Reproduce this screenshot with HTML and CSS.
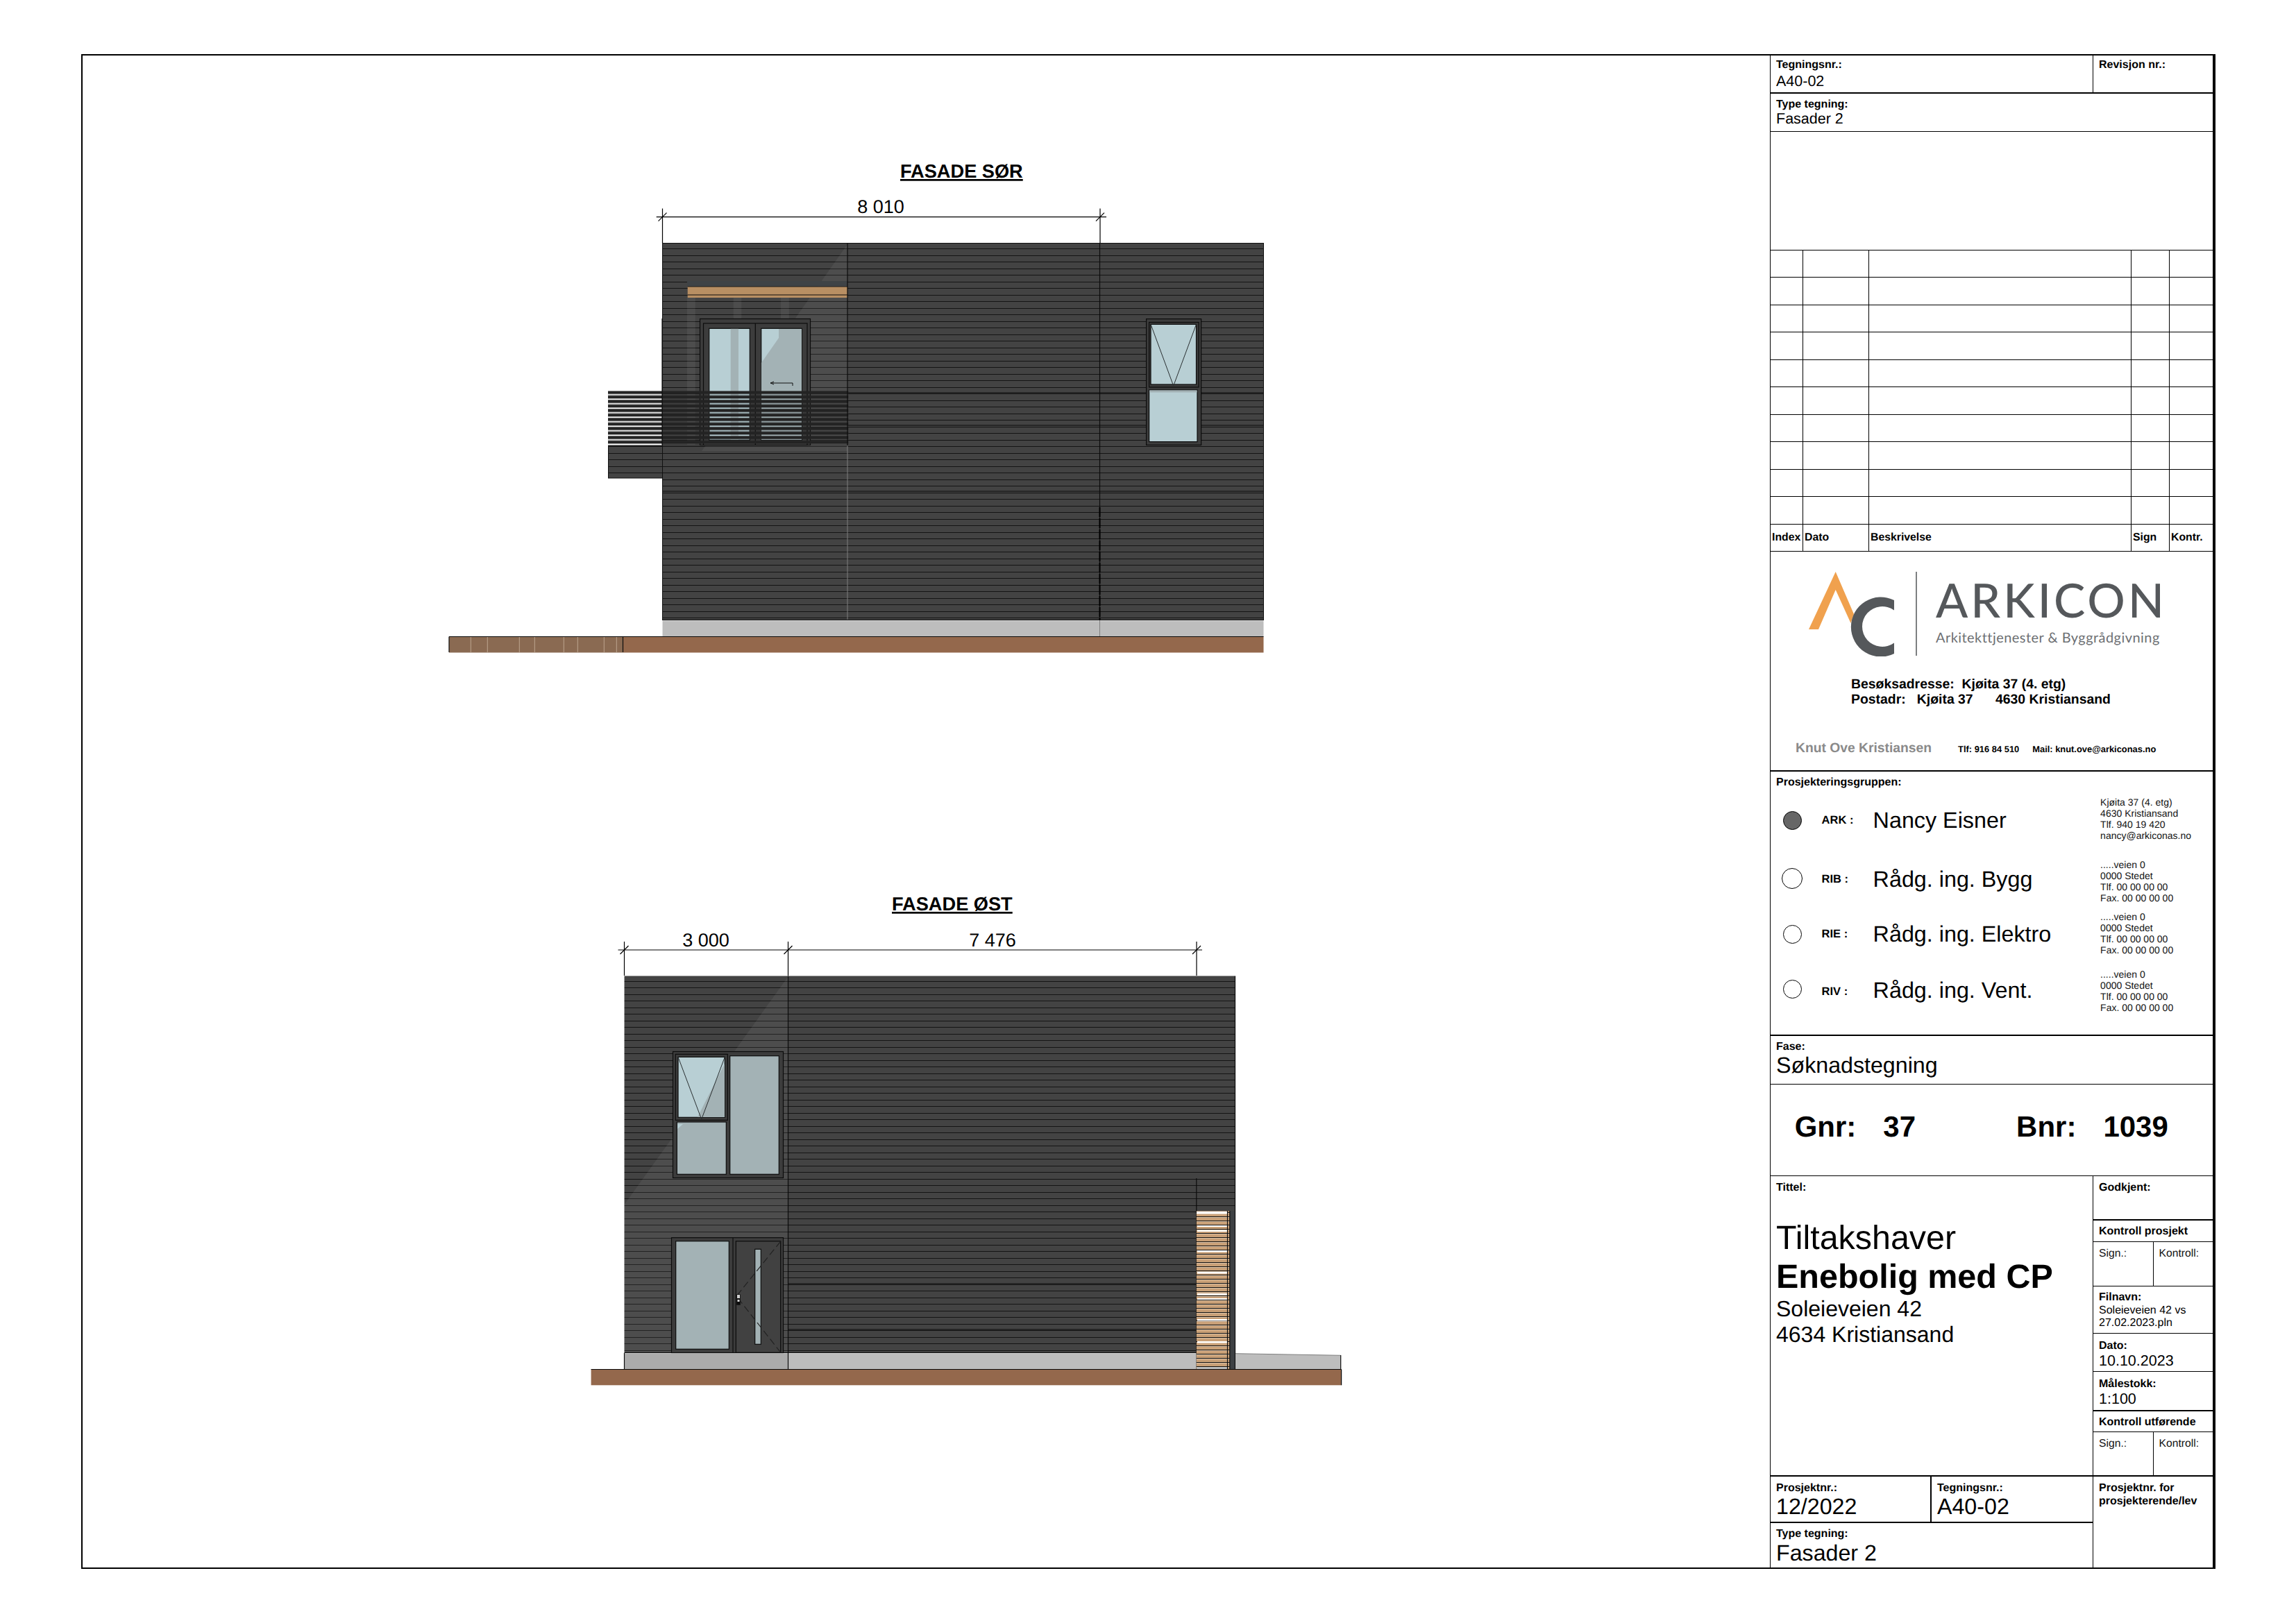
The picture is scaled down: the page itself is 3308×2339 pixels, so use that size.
FILE: index.html
```html
<!DOCTYPE html>
<html lang="no">
<head>
<meta charset="utf-8">
<title>A40-02 Fasader 2</title>
<link rel="stylesheet" href="styles.css">
</head>
<body>
<main class="sheet">
  <section class="drawing">
    <svg class="plan" viewBox="119 80 2431 2179" xmlns="http://www.w3.org/2000/svg">
      <defs>
        <pattern id="sidingS" patternUnits="userSpaceOnUse" width="10" height="19" patternTransform="translate(0 7)">
          <rect width="10" height="19" fill="#434343"/>
          <rect width="10" height="1" fill="#141414"/>
          <rect y="9" width="10" height="1" fill="#141414"/>
        </pattern>
        <pattern id="sidingE" patternUnits="userSpaceOnUse" width="10" height="19" patternTransform="translate(0 8)">
          <rect width="10" height="19" fill="#434343"/>
          <rect width="10" height="1" fill="#141414"/>
          <rect y="9" width="10" height="1" fill="#141414"/>
        </pattern>
        <pattern id="rail" patternUnits="userSpaceOnUse" width="10" height="13" patternTransform="translate(0 563.3)">
          <rect width="10" height="4.6" fill="#232323"/>
          <rect y="6.5" width="10" height="4.6" fill="#232323"/>
        </pattern>
        <pattern id="slats" patternUnits="userSpaceOnUse" width="10" height="6" patternTransform="translate(0 1749)">
          <rect width="10" height="6" fill="#c9a077"/>
          <rect y="4" width="10" height="1" fill="#111"/>
          <rect y="5" width="10" height="0.5" fill="#efe6da"/>
        </pattern>
      </defs>

      <!-- Fasade sør -->
      <text class="dwg-title" x="1297" y="256">FASADE SØR</text>
      <g class="dim">
        <path d="M945.7 312.7H1594M954.5 300.6V350.5M1585 300.6V350.5"/>
        <path d="M948.5 318.7L960.5 306.7M1579 318.7L1591 306.7"/>
      </g>
      <text class="dim-text" x="1269" y="307">8 010</text>

      <rect x="954.5" y="350.5" width="866" height="543" fill="url(#sidingS)" stroke="#111"/>
      <rect x="876.5" y="642.5" width="78" height="46.5" fill="url(#sidingS)" stroke="#111"/>
      <polygon class="sheen" points="1221,352 1221,650 1011,650"/>
      <rect class="sheen" x="990" y="429" width="11.7" height="212"/>
      <rect class="sheen" x="1056.7" y="429" width="11.6" height="30"/>
      <rect class="sheen" x="1125" y="429" width="11.7" height="30"/>
      <path class="heavy" d="M1221 566H1820.5M1221 613H1820.5M955 708H1820.5"/>

      <rect class="beam" x="990.7" y="413" width="230.3" height="16"/>
      <path class="seam" d="M990.7 413H1221M990.7 425H1221"/>
      <path class="shade" d="M990 405H1221V412.5H990Z"/>

      <rect class="frame" x="1008.5" y="459.5" width="159" height="182"/>
      <rect class="frame" x="1013.5" y="466" width="149.5" height="175.5"/>
      <path class="seam" d="M1088.3 466V641.5"/>
      <rect class="pane" x="1021.7" y="473.3" width="58.6" height="161"/>
      <rect class="pane-shade" x="1052.7" y="473.8" width="11.3" height="160"/>
      <rect class="pane" x="1096.7" y="473.3" width="58.6" height="161"/>
      <polygon class="pane-shade" points="1122,474 1155,474 1155,634 1096.9,634 1096.9,523 1122,487"/>
      <path class="thin" d="M1142 556V552H1110M1110 552L1115 550M1110 552L1115 554"/>

      <rect x="876" y="563.3" width="346.3" height="78.4" fill="url(#rail)"/>
      <path class="seam" d="M954 459V563M954 563V641.5"/>

      <rect class="frame" x="1651.6" y="459.6" width="79" height="181.8"/>
      <rect class="frame" x="1655.6" y="464.5" width="71.4" height="93.5"/>
      <rect class="pane" x="1658" y="467.4" width="65.5" height="86.6"/>
      <rect class="pane" x="1655.6" y="562" width="69.4" height="74.6"/>
      <rect class="pane-shade" x="1656" y="562.5" width="68.5" height="3"/>
      <path class="tilt" d="M1658 467.4L1690.7 556L1723.5 467.4"/>

      <path class="seam" d="M1221 350.5V642"/>
      <path class="pale" d="M1221 642V893"/>
      <path class="seam" d="M1584.5 350.5V893"/>
      <path class="heavy-dash" d="M1584.5 731V893"/>
      <rect class="plinth" x="954.5" y="894.5" width="866" height="23"/>
      <path class="seam" d="M954.5 893.5H1820.5"/>
      <path class="pale" d="M1584.5 894V917"/>
      <rect class="ground" x="897.5" y="917.5" width="923" height="23"/>
      <rect class="patio" x="647" y="917.5" width="250.5" height="23"/>
      <path class="seam" d="M647 917.5H1820.5M647 917.5V940M897.5 917.5V940"/>
      <path class="joint" d="M678.3 918V940M702.3 918V940M748.3 918V940M770.3 918V940M812.3 918V940M832.3 918V940M870.3 918V940M888.3 918V940"/>

      <!-- Fasade øst -->
      <text class="dwg-title" x="1285" y="1312">FASADE ØST</text>
      <g class="dim">
        <path d="M890.5 1369H1732M899.5 1357V1406M1135.5 1357V1406M1724 1357V1406"/>
        <path d="M893.5 1375L905.5 1363M1129.5 1375L1141.5 1363M1718 1375L1730 1363"/>
      </g>
      <text class="dim-text" x="1017" y="1364">3 000</text>
      <text class="dim-text" x="1430" y="1364">7 476</text>

      <rect x="899.5" y="1406.5" width="879.5" height="543" fill="url(#sidingE)"/>
      <polygon class="sheen" points="1135,1408 1135,1949 899.5,1949 899.5,1736"/>
      <path class="heavy" d="M1135.5 1850H1723M1135.5 1916H1723"/>
      <path class="seam" d="M1135.5 1406.5V1973M1723.8 1698V1973"/>

      <rect class="frame" x="969.5" y="1515.5" width="159" height="182"/>
      <rect class="frame" x="973.3" y="1519.3" width="75" height="95"/>
      <rect class="pane" x="977" y="1523.3" width="67.3" height="87"/>
      <polygon class="pane-shade" points="1044,1533 1044,1610 1005,1610"/>
      <path class="tilt" d="M977 1523.3L1010.7 1613L1044.3 1523.3"/>
      <rect class="pane-dim" x="975.3" y="1617" width="71" height="75.3"/>
      <polygon class="glint" points="976,1620 984,1620 976,1627"/>
      <rect class="pane-dim" x="1051.7" y="1521.7" width="70.6" height="170.6"/>

      <rect class="frame" x="967.5" y="1783.7" width="161" height="166"/>
      <rect class="pane-dim" x="973.7" y="1788.7" width="76.6" height="155.6"/>
      <path class="seam" d="M1056 1784V1950"/>
      <rect class="leaf" x="1060.3" y="1788.7" width="64.4" height="160.6"/>
      <rect class="pane-dim" x="1087.7" y="1800.3" width="8.6" height="137"/>
      <path class="dash" d="M1124.7 1789L1061 1868L1124.7 1949"/>
      <rect class="handle" x="1061.3" y="1865.3" width="5.4" height="15.4"/>
      <rect class="handle-top" x="1062" y="1866" width="4" height="5"/>
      <rect class="handle-top" x="1062.5" y="1873" width="3" height="3"/>

      <rect class="plinth-dark" x="899.5" y="1950.4" width="235.5" height="23"/>
      <rect class="plinth" x="1135.5" y="1950.4" width="588" height="23"/>
      <path class="seam" d="M899.5 1949.5H1779M899.5 1950V1973M1135.5 1950V1973"/>

      <rect x="1723.8" y="1745.3" width="48" height="228" fill="url(#slats)"/>
      <g class="gap">
        <rect x="1724" y="1746" width="44.5" height="3.5"/>
        <rect x="1725" y="1766" width="43" height="2"/>
        <rect x="1725" y="1773" width="43" height="2"/>
        <rect x="1725" y="1802" width="43" height="2.5"/>
        <rect x="1725" y="1833" width="43" height="2.5"/>
        <rect x="1725" y="1864" width="43" height="2.5"/>
        <rect x="1725" y="1871" width="43" height="2"/>
        <rect x="1725" y="1901" width="43" height="2.5"/>
        <rect x="1725" y="1933" width="43" height="2.5"/>
      </g>
      <rect class="plinth" x="1724.5" y="1970" width="44" height="3"/>
      <rect class="post" x="1771.8" y="1745.3" width="7.5" height="228"/>
      <path class="seam" d="M1768.5 1745V1973M1771.8 1745V1973M1779.5 1406.5V1973"/>
      <polygon class="plinth" points="1780,1950.7 1931.7,1953.3 1931.7,1973.3 1780,1973.3"/>
      <path class="pale" d="M1780 1950.7L1931.7 1953.3"/>
      <path class="seam" d="M1931.7 1953V1973"/>
      <rect class="ground" x="851.6" y="1973.3" width="1081" height="23"/>
      <path class="seam" d="M851.6 1973.5H1932.6M1932.6 1973.5V1996.3"/>
    </svg>
  </section>

  <aside class="block">
    <div class="sec s-head">
      <div class="cell grow">
        <p class="lab">Tegningsnr.:</p>
        <p class="val v-a">A40-02</p>
      </div>
      <div class="cell side first-side">
        <p class="lab">Revisjon nr.:</p>
      </div>
    </div>
    <div class="sec s-type">
      <p class="lab">Type tegning:</p>
      <p class="val v-b">Fasader 2</p>
    </div>
    <div class="sec s-blank"></div>

    <div class="sec revs">
      <div></div><div></div><div></div><div></div><div></div>
      <div></div><div></div><div></div><div></div><div></div>
      <div></div><div></div><div></div><div></div><div></div>
      <div></div><div></div><div></div><div></div><div></div>
      <div></div><div></div><div></div><div></div><div></div>
      <div></div><div></div><div></div><div></div><div></div>
      <div></div><div></div><div></div><div></div><div></div>
      <div></div><div></div><div></div><div></div><div></div>
      <div></div><div></div><div></div><div></div><div></div>
      <div></div><div></div><div></div><div></div><div></div>
      <div class="th">Index</div><div class="th th-wide">Dato</div><div class="th">Beskrivelse</div><div class="th">Sign</div><div class="th">Kontr.</div>
    </div>

    <div class="sec thick company">
      <div class="brand">
        <svg class="mark" viewBox="0 0 124 122" xmlns="http://www.w3.org/2000/svg">
          <polygon class="mark-a" points="38.7,0 65,61 60.5,74 38.7,26 14,83 0,83"/>
          <path class="mark-c" d="M123 41A43 43 0 1 0 123 118L123 102.5A29 29 0 1 1 123 55.5Z"/>
        </svg>
        <span class="brand-rule"></span>
        <div class="brand-text">
          <p class="brand-name">ARKICON</p>
          <p class="brand-tag">Arkitekttjenester &amp; Byggrådgivning</p>
        </div>
      </div>
      <p class="addr">Besøksadresse:&nbsp; Kjøita 37 (4. etg)<br>Postadr:&nbsp;&nbsp; Kjøita 37 &nbsp; &nbsp; &nbsp;4630 Kristiansand</p>
      <div class="contact">
        <span class="person">Knut Ove Kristiansen</span>
        <span class="tel">Tlf: 916 84 510</span>
        <span class="mail">Mail: knut.ove@arkiconas.no</span>
      </div>
    </div>

    <div class="sec thick team">
      <p class="lab">Prosjekteringsgruppen:</p>
      <div class="member r1">
        <span class="dot filled"></span>
        <span class="role">ARK :</span>
        <span class="name">Nancy Eisner</span>
        <p class="info">Kjøita 37 (4. etg)<br>4630 Kristiansand<br>Tlf. 940 19 420<br>nancy@arkiconas.no</p>
      </div>
      <div class="member r2">
        <span class="dot big"></span>
        <span class="role">RIB :</span>
        <span class="name">Rådg. ing. Bygg</span>
        <p class="info">.....veien 0<br>0000 Stedet<br>Tlf. 00 00 00 00<br>Fax. 00 00 00 00</p>
      </div>
      <div class="member r3">
        <span class="dot"></span>
        <span class="role">RIE :</span>
        <span class="name">Rådg. ing. Elektro</span>
        <p class="info">.....veien 0<br>0000 Stedet<br>Tlf. 00 00 00 00<br>Fax. 00 00 00 00</p>
      </div>
      <div class="member r4">
        <span class="dot"></span>
        <span class="role">RIV :</span>
        <span class="name">Rådg. ing. Vent.</span>
        <p class="info">.....veien 0<br>0000 Stedet<br>Tlf. 00 00 00 00<br>Fax. 00 00 00 00</p>
      </div>
    </div>

    <div class="sec s-fase">
      <p class="lab">Fase:</p>
      <p class="big-val">Søknadstegning</p>
    </div>

    <div class="sec s-gnr">
      <span>Gnr:</span><span class="g-37">37</span><span class="g-b">Bnr:</span><span class="g-1039">1039</span>
    </div>

    <div class="foot">
      <div class="foot-l">
        <div class="title-cell">
          <p class="lab">Tittel:</p>
          <p class="t-owner">Tiltakshaver</p>
          <p class="t-house">Enebolig med CP</p>
          <p class="t-addr">Soleieveien 42<br>4634 Kristiansand</p>
        </div>
        <div class="pr-row">
          <div class="pr-cell pr-first">
            <p class="lab">Prosjektnr.:</p>
            <p class="big-val bv">12/2022</p>
          </div>
          <div class="pr-cell">
            <p class="lab">Tegningsnr.:</p>
            <p class="big-val bv">A40-02</p>
          </div>
        </div>
        <div class="type-cell">
          <p class="lab">Type tegning:</p>
          <p class="big-val">Fasader 2</p>
        </div>
      </div>
      <div class="foot-r">
        <div class="rc rc-god"><p class="lab">Godkjent:</p></div>
        <div class="rc rc-k1"><p class="lab">Kontroll prosjekt</p></div>
        <div class="rc rc-sign"><span class="sg">Sign.:</span><span class="sg sg-2">Kontroll:</span></div>
        <div class="rc rc-fil"><p class="lab">Filnavn:</p><p class="file">Soleieveien 42 vs<br>27.02.2023.pln</p></div>
        <div class="rc rc-dato"><p class="lab">Dato:</p><p class="val">10.10.2023</p></div>
        <div class="rc rc-mal"><p class="lab">Målestokk:</p><p class="val">1:100</p></div>
        <div class="rc rc-k2"><p class="lab">Kontroll utførende</p></div>
        <div class="rc rc-sign2"><span class="sg">Sign.:</span><span class="sg sg-2">Kontroll:</span></div>
        <div class="rc rc-pro"><p class="lab lab-two">Prosjektnr. for<br>prosjekterende/lev</p></div>
      </div>
    </div>
  </aside>
</main>
</body>
</html>
```
FILE: styles.css
```css
* { box-sizing: border-box; }
html, body { margin: 0; padding: 0; background: #fff; }
body { width: 3308px; height: 2339px; padding: 78px 0 0 117px; overflow: hidden;
  font-family: "Liberation Sans", Arial, sans-serif; color: #000; text-rendering: geometricPrecision; }
p { margin: 0; }

.sheet { display: flex; width: 3075px; height: 2183px; border: 2px solid #000; border-right-width: 4px; }
.drawing { flex: 0 0 2431px; }
.plan { display: block; width: 2431px; height: 2179px; }

/* svg drawing */
.dwg-title { font: bold 27.2px "Liberation Sans", Arial, sans-serif; text-decoration: underline; fill: #000; }
.dim-text { font: 27px "Liberation Sans", Arial, sans-serif; text-anchor: middle; fill: #000; }
.dim path { fill: none; stroke: #000; stroke-width: 1.2; }
.sheen { fill: rgba(160,160,160,.11); }
.heavy { fill: none; stroke: #0a0a0a; stroke-width: 1; }
.seam { fill: none; stroke: #0c0c0c; stroke-width: 1.2; }
.pale { fill: none; stroke: #7e7e7e; stroke-width: 1; }
.heavy-dash { fill: none; stroke: #000; stroke-width: 2; stroke-dasharray: 14 2; }
.beam { fill: #b88f63; }
.shade { fill: #3f4346; }
.frame { fill: #3c3c3c; stroke: #0c0c0c; stroke-width: 1.2; }
.pane { fill: #b8cfd4; stroke: #0c0c0c; stroke-width: 1.2; }
.pane-shade { fill: #a3b2b5; }
.pane-dim { fill: #a3b2b5; stroke: #0c0c0c; stroke-width: 1.2; }
.glint { fill: #b8cfd4; }
.leaf { fill: #414141; stroke: #0c0c0c; stroke-width: 1.2; }
.thin { fill: none; stroke: #111; stroke-width: 1; }
.tilt { fill: none; stroke: #2a2f31; stroke-width: 1; }
.dash { fill: none; stroke: #222; stroke-width: 1.2; stroke-dasharray: 10 5; }
.handle { fill: #0c0c0c; }
.handle-top { fill: #cfcfcf; }
.plinth { fill: #bdbdbd; }
.plinth-dark { fill: #ababab; }
.ground { fill: #94684c; }
.patio { fill: #8a6a52; }
.joint { fill: none; stroke: #bca58f; stroke-width: 1; }
.gap rect { fill: #fff; }
.post { fill: #3e4144; }

/* title block */
.block { flex: 1; display: flex; flex-direction: column; border-left: 1px solid #000; min-width: 0; }
.sec { border-bottom: 1px solid #000; padding-left: 8px; }
.thick { border-bottom-width: 2px; }
.lab { font: bold 16px/18px "Liberation Sans", Arial, sans-serif; }
.val { font: 21.5px/24px "Liberation Sans", Arial, sans-serif; }
.big-val { font: 32.2px/36px "Liberation Sans", Arial, sans-serif; }

.s-head { display: flex; height: 55px; padding: 0; border-bottom-width: 2px; }
.cell.grow { width: 465px; padding: 5px 0 0 8px; border-right: 1px solid #000; }
.side { padding: 5px 0 0 8px; }
.v-a { margin-top: 1.5px; }
.s-type { height: 55px; padding-top: 7px; }
.v-b { margin-top: -1px; }
.s-blank { height: 171px; }

.revs { height: 434px; padding: 0; border: 0; display: grid;
  grid-template-columns: 47px 95px 378px 55px 62px; grid-template-rows: repeat(11, 1fr); }
.revs div { border-right: 1px solid #000; border-bottom: 1px solid #000; }
.revs div:nth-child(5n) { border-right: 0; }
.th { display: flex; align-items: center; padding-left: 2px; font: bold 15.8px "Liberation Sans", Arial, sans-serif; }
.th-wide { padding-left: 2px; }

.company { height: 317px; padding: 29px 0 0 55px; }
.brand { display: flex; align-items: flex-start; }
.mark { width: 124px; height: 122px; flex: none; }
.mark-a { fill: #f0a14e; }
.mark-c { fill: #55585b; }
.brand-rule { width: 2px; height: 121px; margin-left: 30px; background: #7d7f81; flex: none; }
.brand-text { margin-left: 27px; padding-top: 5px; font-family: Lato, sans-serif; color: #55585b; }
.brand-name { font-size: 68px; line-height: 72px; letter-spacing: 4px; font-weight: 500; white-space: nowrap; }
.brand-tag { font-size: 20px; line-height: 24px; margin-top: 6px; letter-spacing: 0.45px; color: #6d7073; white-space: nowrap; }
.addr { margin: 30px 0 0 61px; font: bold 19.4px/21.5px "Liberation Sans", Arial, sans-serif; white-space: nowrap; }
.contact { display: flex; align-items: baseline; margin: 49px 0 0 -19px; font-weight: bold; white-space: nowrap; }
.person { font-size: 19.3px; color: #8a8a8a; }
.tel { font-size: 12.9px; margin-left: 38px; }
.mail { font-size: 12.9px; margin-left: 19px; }

.team { height: 381px; padding: 6.6px 0 0; }
.team > .lab { padding-left: 8px; }
.member { display: grid; grid-template-columns: 73.6px 74px 327.5px 1fr; align-items: start; margin-top: 0; }
.r1 { height: 90px; margin-top: 11px; }
.r2 { height: 75.5px; }
.r3 { height: 83px; }
.r4 { height: 83px; }
.dot { display: block; width: 27px; height: 27px; margin-left: 17.5px; border: 1px solid #000; border-radius: 50%; background: #fff; }
.dot.big { width: 30px; height: 30px; margin-left: 16px; }
.dot.filled { background: #666; }
.role { font: bold 16.5px/18px "Liberation Sans", Arial, sans-serif; }
.name { font: 32.3px/36px "Liberation Sans", Arial, sans-serif; white-space: nowrap; }
.info { font: 14px/16px "Liberation Sans", Arial, sans-serif; white-space: nowrap; color: #111; }
.r1 .dot { margin-top: 21px; } .r1 .role { margin-top: 25.8px; } .r1 .name { margin-top: 16.3px; }
.r2 .dot { margin-top: 13.5px; } .r2 .role { margin-top: 20.8px; } .r2 .name { margin-top: 11.3px; }
.r3 .dot { margin-top: 19.5px; } .r3 .role { margin-top: 24.3px; } .r3 .name { margin-top: 14.8px; }
.r4 .dot { margin-top: 15.5px; } .r4 .role { margin-top: 24.3px; } .r4 .name { margin-top: 12.8px; }

.s-fase { height: 70px; padding-top: 6.6px; }
.s-fase .big-val { margin-top: -1px; }
.s-gnr { height: 132px; padding: 37px 0 0 34.7px; display: flex; font: bold 42px/48px "Liberation Sans", Arial, sans-serif; }
.g-37 { margin-left: 39px; }
.g-b { margin-left: 145px; }
.g-1039 { margin-left: 39px; }

.foot { display: flex; flex: 1; min-height: 0; }
.foot-l { width: 465px; display: flex; flex-direction: column; border-right: 1px solid #000; }
.title-cell { height: 433px; padding: 7.6px 0 0 8px; border-bottom: 2px solid #000; }
.t-owner { margin-top: 35.8px; font: 48.4px/56px "Liberation Sans", Arial, sans-serif; }
.t-house { font: bold 48.5px/56px "Liberation Sans", Arial, sans-serif; white-space: nowrap; }
.t-addr { font: 32px/37px "Liberation Sans", Arial, sans-serif; }
.pr-row { height: 67px; display: flex; border-bottom: 2px solid #000; }
.pr-cell { padding: 7.6px 0 0 8px; flex: 1; }
.pr-first { flex: 0 0 232px; border-right: 2px solid #000; }
.bv { margin-top: -1px; }
.type-cell { flex: 1; padding: 6.6px 0 0 8px; }

.foot-r { flex: 1; display: flex; flex-direction: column; min-width: 0; }
.rc { padding: 6.6px 0 0 8px; border-bottom: 1px solid #000; }
.rc-god { height: 64px; padding-top: 7.6px; border-bottom-width: 2px; }
.rc-k1 { height: 31px; }
.rc-sign { height: 64px; padding: 0; display: flex; }
.rc-fil { height: 68px; }
.file { font: 16px/18px "Liberation Sans", Arial, sans-serif; margin-top: 1px; white-space: nowrap; }
.rc-dato { height: 55px; padding-top: 8.6px; }
.rc-mal { height: 57px; padding-top: 8.6px; border-bottom-width: 2px; }
.rc-k2 { height: 30px; }
.rc-sign2 { height: 64px; padding: 0; display: flex; border-bottom-width: 2px; }
.rc-pro { flex: 1; border-bottom: 0; }
.lab-two { line-height: 19px; }
.sg { font: 15.7px/18px "Liberation Sans", Arial, sans-serif; padding: 8px 0 0 8px; color: #111; }
.sg:first-child { width: 87px; border-right: 1px solid #000; }
.sg-2 { padding-left: 7.5px; }
```
